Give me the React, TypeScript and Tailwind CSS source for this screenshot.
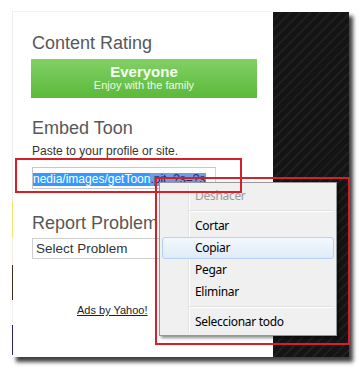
import React from "react";

function MenuItem({ label, disabled, active }: { label: string; disabled?: boolean; active?: boolean }) {
  return (
    <div
      className={
        "relative h-[22px] pl-[32px] flex items-center text-[12px] tracking-[-0.3px] leading-[22px] rounded-[3px] border " +
        (active
          ? "border-[#b4d0f4] bg-[linear-gradient(#f3f8fd,#dfebf8)]"
          : "border-transparent") +
        (disabled ? " text-[#9a9a9a]" : " text-[#000]")
      }
    >
      {label}
    </div>
  );
}

function Separator() {
  return (
    <div className="h-[8px] flex flex-col justify-center pl-[27px]">
      <div className="h-[1px] bg-[#e0e0e0]" />
      <div className="h-[1px] bg-white" />
    </div>
  );
}

export default function App() {
  return (
    <div className="w-[362px] h-[370px] bg-white relative overflow-hidden font-['Liberation_Sans',Arial,sans-serif]">
      <div className="pt-[11px] pl-[12px]">
        <div className="flex w-[337px] h-[346px] shadow-[4px_5px_4px_rgba(0,0,0,0.75)]">
          <div className="w-[261px] bg-white flex border-t border-[#f2f2f2]">
            <div className="w-[1px] flex flex-col">
              <div className="h-[190px] bg-[#ececec]" />
              <div className="h-[35px] bg-[#efe86a]" />
              <div className="h-[28px] bg-[#f3efe4]" />
              <div className="h-[35px] bg-[#3b2f1c]" />
              <div className="h-[25px] bg-[#f0f0f0]" />
              <div className="h-[30px] bg-[#23237a]" />
            </div>
            <div className="flex-1 pl-[19px] pt-[22px] flex flex-col items-start">
              <div className="text-[18px] leading-[18px] text-[#585858]">Content Rating</div>
              <div className="mt-[7px] -ml-[1px] w-[226px] h-[39px] pt-[5px] bg-[linear-gradient(#82d065,#5bb93b)] flex flex-col items-center">
                <div className="text-[15px] leading-[15px] font-bold text-[#f4fff0]">Everyone</div>
                <div className="text-[11px] leading-[12px] text-[#ecfbe6]">Enjoy with the family</div>
              </div>
              <div className="mt-[21px] text-[18px] leading-[18px] text-[#585858]">Embed Toon</div>
              <div className="mt-[8px] text-[12px] leading-[12px] text-[#333]">Paste to your profile or site.</div>
              <div className="mt-[10px] w-[184px] h-[22px] border border-[#c4c6cc] border-r-[#e6d2b4] pt-[5px] overflow-hidden whitespace-nowrap">
                <div className="flex text-[12px] leading-[13px]">
                  <span className="bg-[#3399ff] text-white">nedia/images/getToon</span>
                  <span className="bg-[#6f9de0] text-[#1b2f7a] w-[56px] overflow-hidden">.pit_?s=?s</span>
                </div>
              </div>
              <div className="mt-[25px] text-[18px] leading-[18px] text-[#585858]">Report Problem</div>
              <div className="mt-[6px] w-[184px] h-[21px] border border-[#cfcfcf] pl-[3px] text-[13.5px] leading-[19px] text-[#333]">
                Select Problem
              </div>
              <div className="mt-[46px] ml-[45px] text-[11px] leading-[11px] text-[#222] underline">Ads by Yahoo!</div>
            </div>
          </div>
          <div className="flex-1 mt-[1px] bg-[repeating-linear-gradient(135deg,#141414_0px,#141414_5px,#1f1f1f_5px,#1f1f1f_7px)]" />
        </div>
      </div>

      {/* context menu */}
      <div className="absolute left-[159px] top-[182px] w-[178px] h-[154px] bg-[#f0f0f0] border border-[#979797] shadow-[2px_2px_3px_rgba(0,0,0,0.45)] p-[2px] font-['Noto_Sans','Open_Sans',sans-serif]">
        <div className="absolute left-[28px] top-[2px] bottom-[2px] w-[2px] flex">
          <div className="w-[1px] bg-[#e2e3e3]" />
          <div className="w-[1px] bg-white" />
        </div>
        <div className="relative flex flex-col">
          <MenuItem label="Deshacer" disabled />
          <Separator />
          <MenuItem label="Cortar" />
          <MenuItem label="Copiar" active />
          <MenuItem label="Pegar" />
          <MenuItem label="Eliminar" />
          <Separator />
          <MenuItem label="Seleccionar todo" />
        </div>
      </div>

      {/* red annotation boxes */}
      <div className="absolute left-[15px] top-[158px] w-[227px] h-[35px] border-2 border-[#d5202a]" />
      <div className="absolute left-[155px] top-[177px] w-[195px] h-[168px] border-2 border-[#d5202a]" />
    </div>
  );
}
